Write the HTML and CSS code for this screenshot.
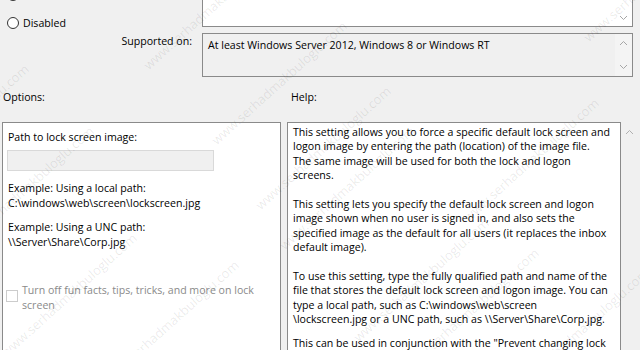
FILE: index.html
```html
<!DOCTYPE html>
<html>
<head>
<meta charset="utf-8">
<link rel="stylesheet" href="styles.css">
</head>
<body>
<div class="page">
  <div class="row-top">
    <div class="radios">
      <label class="radio"><span class="circle"></span><span>Enabled</span></label>
      <label class="radio"><span class="circle"></span><span>Disabled</span></label>
    </div>
    <div class="comment">
      <div class="comment-text"></div>
      <div class="vscroll">
        <span></span>
        <svg class="chev" width="9" height="6" viewBox="0 0 9 6"><polyline points="1,1 4.5,4.5 8,1" fill="none" stroke="#a6a6a6" stroke-width="1"/></svg>
      </div>
    </div>
  </div>
  <div class="row-support">
    <div class="support-label">Supported on:</div>
    <div class="support-box">
      <div class="support-text">At least Windows Server 2012, Windows 8 or Windows RT</div>
      <div class="vscroll light">
        <svg class="chev" width="9" height="6" viewBox="0 0 9 6"><polyline points="1,5 4.5,1.5 8,5" fill="none" stroke="#a6a6a6" stroke-width="1"/></svg>
        <svg class="chev" width="9" height="6" viewBox="0 0 9 6"><polyline points="1,1 4.5,4.5 8,1" fill="none" stroke="#a6a6a6" stroke-width="1"/></svg>
      </div>
    </div>
  </div>
  <div class="row-labels">
    <div class="lbl-options">Options:</div>
    <div class="lbl-help">Help:</div>
  </div>
  <div class="row-panels">
    <div class="options">
      <div class="opt-line">Path to lock screen image:</div>
      <div class="textbox"></div>
      <div class="opt-line">Example: Using a local path:</div>
      <div class="opt-line">C:\windows\web\screen\lockscreen.jpg</div>
      <div class="opt-line gap">Example: Using a UNC path:</div>
      <div class="opt-line">\\Server\Share\Corp.jpg</div>
      <div class="check-row">
        <span class="checkbox"></span>
        <span class="check-text">Turn off fun facts, tips, tricks, and more on lock screen</span>
      </div>
    </div>
    <div class="help">
      <div class="help-text">
        <p>This setting allows you to force a specific default lock screen and logon image by entering the path (location) of the image file.<br>The same image will be used for both the lock and logon<br>screens.</p>
        <p>This setting lets you specify the default lock screen and logon image shown when no user is signed in, and also sets the specified image as the default for all users (it replaces the inbox default image).</p>
        <p class="tight">To use this setting, type the fully qualified path and name of the file that stores the default lock screen and logon image. You can type a local path, such as C:\windows\web\screen<br>\lockscreen.jpg or a UNC path, such as \\Server\Share\Corp.jpg.</p>
        <p>This can be used in conjunction with the "Prevent changing lock screen and logon image" setting to always force the specified lock screen and logon image to be shown.</p>
      </div>
      <div class="help-scroll">
        <svg class="chev" width="9" height="6" viewBox="0 0 9 6"><polyline points="1,5 4.5,1.5 8,5" fill="none" stroke="#b0b0b0" stroke-width="1"/></svg>
      </div>
    </div>
  </div>
</div>
<div class="watermarks">
  <span class="wm wm1">www.serhadmakbuloglu.com</span>
  <span class="wm wm2">www.serhadmakbuloglu.com</span>
  <span class="wm wm3">www.serhadmakbuloglu.com</span>
  <span class="wm wm4">www.serhadmakbuloglu.com</span>
  <span class="wm wm5">www.serhadmakbuloglu.com</span>
  <span class="wm wm6">www.serhadmakbuloglu.com</span>
  <span class="wm wm7">www.serhadmakbuloglu.com</span>
  <span class="wm wm8">www.serhadmakbuloglu.com</span>
  <span class="wm wm9">www.serhadmakbuloglu.com</span>
  <span class="wm wm10">www.serhadmakbuloglu.com</span>
  <span class="wm wm11">www.serhadmakbuloglu.com</span>
  <span class="wm wm12">www.serhadmakbuloglu.com</span>
  <span class="wm wm13">www.serhadmakbuloglu.com</span>
</div>
</body>
</html>
```
FILE: styles.css
```css
* { box-sizing: border-box; }
html, body { margin: 0; padding: 0; }
body {
  background: #f0f0f0;
  font-family: "Open Sans", "Noto Sans", sans-serif;
  font-size: 10.6px;
  color: #000;
  width: 640px;
  height: 350px;
  overflow: hidden;
  position: relative;
}
.page { display: flex; flex-direction: column; }

.row-top { display: flex; height: 27px; }
.radios {
  width: 202px;
  display: flex;
  flex-direction: column;
  gap: 14px;
  margin-top: -12px;
  padding-left: 7px;
}
.radio { display: flex; align-items: center; gap: 4px; height: 14px; line-height: 14px; }
.circle {
  width: 12px; height: 12px;
  border: 1px solid #333;
  border-radius: 50%;
  background: #fff;
}
.comment {
  width: 431px;
  height: 40px;
  margin-top: -13px;
  border: 1px solid #8a8a8a;
  background: #fff;
  display: flex;
}
.comment-text { flex: 1; }
.vscroll {
  width: 17px;
  display: flex;
  flex-direction: column;
  justify-content: space-between;
  align-items: center;
  padding: 7px 0 5px;
}
.vscroll.light { background: #f4f4f4; padding: 6px 0 6px; }

.row-support { display: flex; margin-top: 6px; }
.support-label {
  width: 202px;
  text-align: right;
  padding-right: 10px;
  padding-top: 1px;
  line-height: 14px;
}
.support-box {
  width: 431px;
  height: 44px;
  border: 1px solid #8a8a8a;
  background: #f0f0f0;
  display: flex;
}
.support-text { flex: 1; padding: 4px 0 0 5px; line-height: 14px; }

.row-labels { display: flex; margin-top: 13px; height: 32px; line-height: 14px; }
.lbl-options { width: 291px; padding-left: 3px; }

.row-panels { display: flex; gap: 6px; padding-left: 2px; }
.options {
  width: 279px;
  height: 240px;
  border: 1px solid #8a8a8a;
  background: #fff;
  padding: 7px 0 0 4px;
  line-height: 14.4px;
}
.opt-line { padding-left: 1px; white-space: nowrap; }
.textbox {
  width: 207px;
  height: 21px;
  border: 1px solid #d9d9d9;
  background: #f0f0f0;
  margin: 6px 0 10px 0;
}
.opt-line.gap { margin-top: 10px; }
.check-row { display: flex; align-items: flex-start; gap: 4px; margin-top: 34px; color: #8a8a8a; }
.checkbox {
  width: 12px; height: 12px;
  border: 1px solid #cccccc;
  background: #fff;
  margin-top: 7px;
  margin-left: -1px;
  flex: none;
}
.check-text { width: 245px; line-height: 15px; }

.help { display: flex; }
.help-text {
  width: 334px;
  height: 240px;
  border: 1px solid #8a8a8a;
  background: #fff;
  padding: 2px 4px 0 5px;
  line-height: 14.4px;
}
.help-text p { margin: 0 0 14.4px 0; }
.help-text p.tight { margin-bottom: 9px; }
.help-scroll {
  width: 17px;
  display: flex;
  justify-content: center;
  padding-top: 7px;
}

.watermarks { position: absolute; inset: 0; pointer-events: none; }
.wm {
  position: absolute;
  font-family: "Open Sans", sans-serif;
  font-size: 13px;
  line-height: 14px;
  color: rgba(0, 0, 0, 0.09);
  transform: rotate(-42deg);
  transform-origin: left bottom;
  white-space: nowrap;
}
.wm1 { left: -100px; top: 176px; }
.wm2 { left: -35px; top: 238px; }
.wm3 { left: 8px; top: 345px; }
.wm4 { left: 110px; top: 372px; }
.wm5 { left: 150px; top: 58px; }
.wm6 { left: 218px; top: 133px; }
.wm7 { left: 262px; top: 198px; }
.wm8 { left: 286px; top: 238px; }
.wm9 { left: 360px; top: 330px; }
.wm10 { left: 410px; top: 360px; }
.wm11 { left: 470px; top: 210px; }
.wm12 { left: 520px; top: 380px; }
.wm13 { left: 590px; top: 30px; }
```
